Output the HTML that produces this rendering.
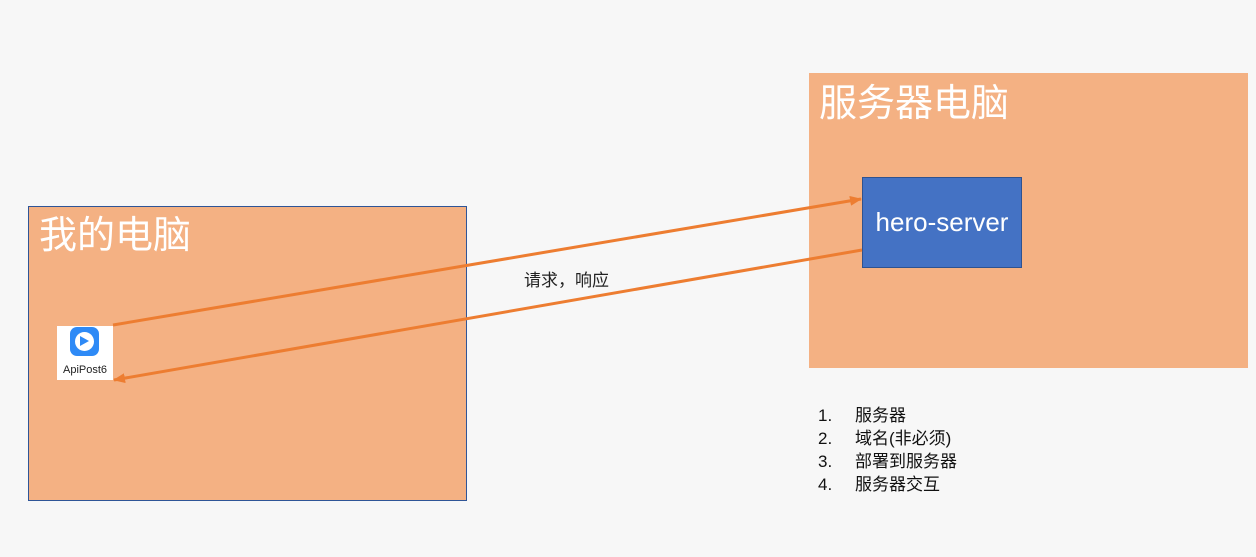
<!DOCTYPE html>
<html><head><meta charset="utf-8"><style>
body{margin:0;width:1256px;height:557px;background:#f7f7f7;position:relative;overflow:hidden;font-family:"Liberation Sans","Noto Sans CJK SC",sans-serif}
.box{position:absolute;background:#f4b183}
.t{position:absolute;color:#fff;font-size:38px;line-height:1}
.list{position:absolute;left:818px;top:404px;font-size:17px;line-height:23px;color:#111}
.list span{display:inline-block;width:37px}
</style></head><body>
<div class="box" style="left:28px;top:206px;width:437px;height:293px;border:1px solid #2f5597"></div>
<div class="t" style="left:39px;top:217px">我的电脑</div>
<div class="box" style="left:809px;top:73px;width:439px;height:295px"></div>
<div class="t" style="left:819px;top:85px">服务器电脑</div>
<div style="position:absolute;left:862px;top:177px;width:158px;height:89px;background:#4472c4;border:1px solid #2f528f;color:#fff;font-size:26px;display:flex;align-items:center;justify-content:center">hero-server</div>
<div style="position:absolute;left:57px;top:326px;width:56px;height:54px;background:#fff"></div>
<div style="position:absolute;left:70px;top:327px;width:29px;height:29px;background:#2e8af6;border-radius:7px"></div>
<div style="position:absolute;left:75px;top:332px;width:19px;height:19px;background:#fff;border-radius:50%"></div>
<div style="position:absolute;left:80px;top:336px;width:0;height:0;border-left:9px solid #2e8af6;border-top:5px solid transparent;border-bottom:5px solid transparent"></div>
<div style="position:absolute;left:57px;top:364px;width:56px;text-align:center;font-size:11px;color:#222">ApiPost6</div>
<div style="position:absolute;left:524px;top:266px;font-size:17px;color:#222">请求，响应</div>
<svg width="1256" height="557" style="position:absolute;left:0;top:0">
<defs><marker id="a" markerWidth="12" markerHeight="10" refX="11" refY="5" orient="auto" markerUnits="userSpaceOnUse"><path d="M0,0 L12,5 L0,10 Z" fill="#ed7d31"/></marker></defs>
<line x1="113" y1="325" x2="861" y2="199" stroke="#ed7d31" stroke-width="3" marker-end="url(#a)"/>
<line x1="862" y1="250" x2="114" y2="380" stroke="#ed7d31" stroke-width="3" marker-end="url(#a)"/>
</svg>
<div class="list"><div><span>1.</span>服务器</div><div><span>2.</span>域名(非必须)</div><div><span>3.</span>部署到服务器</div><div><span>4.</span>服务器交互</div></div>
</body></html>
